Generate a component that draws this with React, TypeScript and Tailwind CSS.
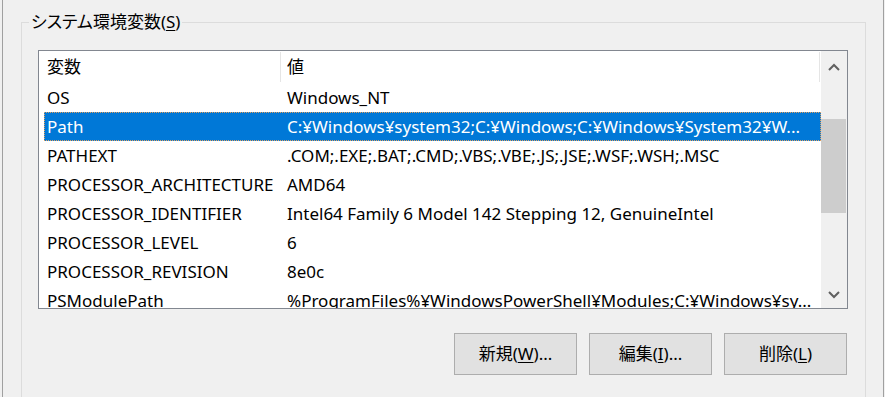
import React from "react";

const rows: { name: string; value: string; selected?: boolean }[] = [
  { name: "OS", value: "Windows_NT" },
  { name: "Path", value: "C:¥Windows¥system32;C:¥Windows;C:¥Windows¥System32¥W...", selected: true },
  { name: "PATHEXT", value: ".COM;.EXE;.BAT;.CMD;.VBS;.VBE;.JS;.JSE;.WSF;.WSH;.MSC" },
  { name: "PROCESSOR_ARCHITECTURE", value: "AMD64" },
  { name: "PROCESSOR_IDENTIFIER", value: "Intel64 Family 6 Model 142 Stepping 12, GenuineIntel" },
  { name: "PROCESSOR_LEVEL", value: "6" },
  { name: "PROCESSOR_REVISION", value: "8e0c" },
  { name: "PSModulePath", value: "%ProgramFiles%¥WindowsPowerShell¥Modules;C:¥Windows¥sy..." },
];

function Button({ label, mnemonic, suffix }: { label: string; mnemonic: string; suffix: string }) {
  return (
    <button className="w-[123px] h-[42px] bg-[#e1e1e1] border border-[#adadad] flex items-center justify-center text-[17px] text-black">
      <span>
        {label}(<span className="underline underline-offset-2">{mnemonic}</span>){suffix}
      </span>
    </button>
  );
}

export default function App() {
  return (
    <div className="w-[885px] h-[397px] bg-[#f0f0f0] flex overflow-hidden font-['Noto_Sans','Noto_Sans_CJK_JP',sans-serif] text-black">
      <div className="w-[2px]" />
      <div className="w-px bg-[#a0a0a0]" />
      <div className="w-[18px]" />
      {/* Group box */}
      <div className="relative w-[845px] mt-[22px] border-t border-l border-r border-[#dcdcdc] pl-[16px] pr-[17px] pt-[27px] flex flex-col">
        <div className="absolute -top-[13px] left-[7px] px-[2px] bg-[#f0f0f0] text-[17px] leading-[24px] [font-feature-settings:'palt']">
          システム環境変数(<span className="underline underline-offset-2">S</span>)
        </div>
        {/* List view */}
        <div className="w-[810px] h-[259px] border border-[#828790] bg-white flex overflow-hidden">
          <div className="flex-1 flex flex-col overflow-hidden text-[17px]">
            <div className="h-[32px] flex shrink-0">
              <div className="ml-[5px] w-[236px] pl-[3px] flex items-center">変数</div>
              <div className="w-px my-[1px] bg-[#e5e5e5]" />
              <div className="flex-1 pl-[6px] flex items-center">値</div>
              <div className="w-px my-[1px] bg-[#e5e5e5] mr-[1px]" />
            </div>
            {rows.map((r) => (
              <div
                key={r.name}
                className={
                  r.selected
                    ? "h-[29px] shrink-0 ml-[5px] pt-px flex items-center bg-[#0078d7] text-white outline-1 outline-dotted outline-[#e0a060] -outline-offset-1"
                    : "h-[29px] shrink-0 ml-[5px] pt-px flex items-center"
                }
              >
                <div className="w-[237px] pl-[3px] whitespace-nowrap overflow-hidden">{r.name}</div>
                <div className="flex-1 pl-[6px] whitespace-nowrap overflow-hidden">{r.value}</div>
              </div>
            ))}
          </div>
          {/* Scrollbar */}
          <div className="w-[26px] bg-[#f0f0f0] flex flex-col">
            <div className="h-[32px] flex items-center justify-center">
              <svg width="12" height="8" viewBox="0 0 12 8">
                <polyline points="1,7 6,2 11,7" fill="none" stroke="#606060" strokeWidth="2" />
              </svg>
            </div>
            <div className="flex-1 flex flex-col">
              <div className="mt-[36px] h-[94px] mr-px bg-[#cdcdcd]" />
            </div>
            <div className="h-[26px] flex items-center justify-center">
              <svg width="12" height="8" viewBox="0 0 12 8">
                <polyline points="1,1 6,6 11,1" fill="none" stroke="#606060" strokeWidth="2" />
              </svg>
            </div>
          </div>
        </div>
        {/* Buttons */}
        <div className="mt-[24px] flex justify-end gap-[12px] pr-px">
          <Button label="新規" mnemonic="W" suffix="..." />
          <Button label="編集" mnemonic="I" suffix="..." />
          <Button label="削除" mnemonic="L" suffix="" />
        </div>
      </div>
      <div className="w-[17px]" />
      <div className="w-px bg-[#a0a0a0]" />
      <div className="w-px" />
    </div>
  );
}
